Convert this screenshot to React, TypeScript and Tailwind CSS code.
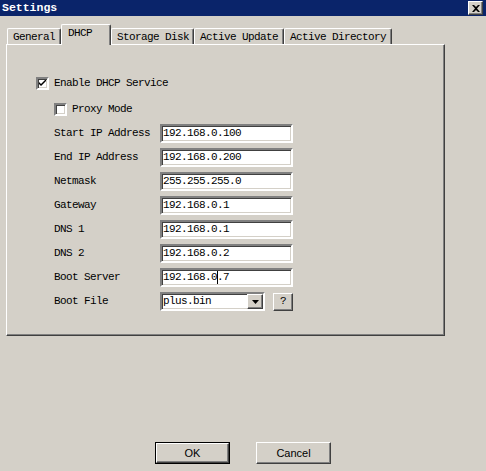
const raised =
  "bg-[#d4d0c8] border border-t-white border-l-white border-r-[#404040] border-b-[#404040] shadow-[inset_-1px_-1px_#808080]";
const sunken =
  "bg-white border-2 border-t-[#808080] border-l-[#808080] border-r-white border-b-white shadow-[inset_1px_1px_#404040,inset_-1px_-1px_#d4d0c8]";

function Checkbox({ checked }: { checked?: boolean }) {
  return (
    <div className={`w-[13px] h-[13px] flex items-center justify-center ${sunken}`}>
      {checked && (
        <svg width="7" height="7" viewBox="0 0 7 7">
          <path d="M0 2 L0 4 L2 6 L7 1 L7 -1 L2 4 Z" fill="#000" />
        </svg>
      )}
    </div>
  );
}

function Tab({ label, width, active }: { label: string; width: string; active?: boolean }) {
  return (
    <div
      className={`${width} ${
        active ? "h-[21px] -mb-px relative z-10 pt-px items-start pl-[6px]" : "h-[16px] items-center pl-[5px]"
      } flex leading-[14px] bg-[#d4d0c8] border-t border-l border-t-white border-l-white border-r border-r-[#404040] shadow-[inset_-1px_0_#808080] rounded-t-[2px] whitespace-nowrap`}
    >
      {label}
    </div>
  );
}

const rows: { label: string; value: string }[] = [
  { label: "Start IP Address", value: "192.168.0.100" },
  { label: "End IP Address", value: "192.168.0.200" },
  { label: "Netmask", value: "255.255.255.0" },
  { label: "Gateway", value: "192.168.0.1" },
  { label: "DNS 1", value: "192.168.0.1" },
  { label: "DNS 2", value: "192.168.0.2" },
];

export default function App() {
  return (
    <div className="w-[486px] h-[471px] bg-[#d4d0c8] flex flex-col overflow-hidden text-black font-[family-name:'Liberation_Mono',monospace] text-[11px] tracking-[-0.6px]">
      {/* title bar */}
      <div className="h-[16px] bg-[#0a246a] flex items-center justify-between pl-[2px] pr-[3px]">
        <span className="text-white font-bold text-[11.5px] tracking-[0px]">Settings</span>
        <div className={`w-[15px] h-[14px] flex items-center justify-center ${raised}`}>
          <svg width="8" height="7" viewBox="0 0 8 7">
            <path d="M0 0 L2 0 L4 2 L6 0 L8 0 L5 3.5 L8 7 L6 7 L4 5 L2 7 L0 7 L3 3.5 Z" fill="#000" />
          </svg>
        </div>
      </div>

      <div className="pl-[6px] pt-[8px]">
        <div className="flex items-end pl-px">
          <Tab label="General" width="w-[54px]" />
          <Tab label="DHCP" width="w-[50px]" active />
          <Tab label="Storage Disk" width="w-[83px]" />
          <Tab label="Active Update" width="w-[90px]" />
          <Tab label="Active Directory" width="w-[108px]" />
        </div>

        <div className="w-[439px] h-[292px] border border-t-white border-l-white border-r-[#404040] border-b-[#404040] shadow-[inset_-1px_-1px_#808080] flex flex-col pl-[29px] pt-[32px]">
          <label className="flex items-center h-[13px] gap-[5px]">
            <Checkbox checked />
            <span>Enable DHCP Service</span>
          </label>
          <label className="flex items-center h-[13px] gap-[5px] ml-[18px] mt-[13px]">
            <Checkbox />
            <span>Proxy Mode</span>
          </label>

          <div className="ml-[18px] mt-[8px] grid grid-cols-[106px_auto] gap-y-[5px] items-center">
            {rows.map((r) => (
              <div key={r.label} className="contents">
                <span>{r.label}</span>
                <div className={`w-[133px] h-[19px] flex items-center pl-px ${sunken}`}>{r.value}</div>
              </div>
            ))}
            <span>Boot Server</span>
            <div className={`w-[133px] h-[19px] flex items-center pl-px ${sunken}`}>
              192.168.0
              <span className="inline-block w-px h-[13px] bg-black -mr-px" />
              .7
            </div>
            <span>Boot File</span>
            <div className="flex items-center">
              <div className={`w-[105px] h-[19px] flex items-center justify-between pl-px ${sunken}`}>
                <span>plus.bin</span>
                <div className={`w-[16px] h-[15px] flex items-center justify-center ${raised}`}>
                  <svg width="7" height="4" viewBox="0 0 7 4">
                    <path d="M0 0 L7 0 L3.5 4 Z" fill="#000" />
                  </svg>
                </div>
              </div>
              <div className={`ml-[8px] w-[20px] h-[18px] flex items-center justify-center ${raised}`}>?</div>
            </div>
          </div>
        </div>
      </div>

      <div className="mt-auto mb-[7px] flex justify-center gap-[26px] font-[family-name:'Liberation_Sans',sans-serif] text-[11px] tracking-normal">
        <div className="w-[75px] h-[22px] border border-black">
          <div className={`w-full h-full flex items-center justify-center ${raised}`}>OK</div>
        </div>
        <div className={`w-[75px] h-[22px] flex items-center justify-center ${raised}`}>Cancel</div>
      </div>
    </div>
  );
}
